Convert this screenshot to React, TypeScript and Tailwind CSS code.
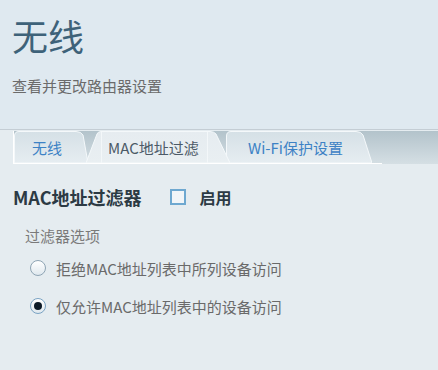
import React from "react";

type TabProps = {
  label: string;
  width: number;
  path: string;
  active?: boolean;
  className: string;
  textClass: string;
};

const Tab = ({ label, width, path, active, className, textClass }: TabProps) => (
  <div className={`relative h-[32px] flex items-center shrink-0 ${className}`}>
    <svg
      className="absolute inset-0"
      width={width}
      height={32}
      viewBox={`0 0 ${width} 32`}
    >
      <defs>
        <linearGradient id={`g-${label}`} x1="0" y1="0" x2="0" y2="1">
          <stop offset="0" stopColor={active ? "#e6ecf0" : "#d5e0e6"} />
          <stop offset="1" stopColor={active ? "#e9eff2" : "#e6edf1"} />
        </linearGradient>
      </defs>
      <path d={path} fill={`url(#g-${label})`} stroke="#f4f8fa" strokeWidth="1" />
      {active && (
        <>
          <line x1="15.5" y1="1" x2="15.5" y2="32" stroke="#f3f7f9" strokeWidth="1" />
          <line x1="121.5" y1="1" x2="121.5" y2="32" stroke="#f3f7f9" strokeWidth="1" />
        </>
      )}
    </svg>
    <span className={`relative text-[15px] leading-none whitespace-nowrap ${textClass}`}>
      {label}
    </span>
  </div>
);

const Radio = ({ checked, label }: { checked?: boolean; label: string }) => (
  <div className="flex items-center h-[16px]">
    <span
      className={`shrink-0 w-[16px] h-[16px] rounded-full border flex items-center justify-center bg-gradient-to-b from-white to-[#dfe8ee] ${
        checked ? "border-[#7aa3c3]" : "border-[#8ea4b4]"
      }`}
    >
      {checked && <span className="w-[8px] h-[8px] rounded-full bg-[#0d1b28]" />}
    </span>
    <span className="ml-[10px] text-[15px] leading-none text-[#6a6a6a]">{label}</span>
  </div>
);

export default function App() {
  return (
    <div className="w-[438px] h-[370px] overflow-hidden bg-[#e5ecf0] font-['Noto_Sans_CJK_SC',sans-serif]">
      <header className="h-[130px] bg-[#dfe9f0] border-b border-[#c4cdd4] px-[12px] pt-[17px]">
        <h1 className="text-[36px] leading-none text-[#3e6279]">无线</h1>
        <p className="mt-[25px] text-[15px] leading-none text-[#6b6b6b]">查看并更改路由器设置</p>
      </header>

      <div className="mt-[1px] ml-[13px] h-[33px] border-l border-white bg-gradient-to-b from-[#b3c3cb] to-[#d5dfe4]">
        <div className="flex items-end h-[32px]">
          <Tab
            label="无线"
            width={74}
            path="M0.5,32 V5 Q0.5,0.5 5,0.5 H62 Q67,0.5 69,4 L74,32 Z"
            className="w-[74px] pl-[18px]"
            textClass="text-[#3d82c5]"
          />
          <Tab
            label="MAC地址过滤"
            width={144}
            path="M0,32 L11,3 Q12,0.5 15,0.5 H124 Q128,0.5 130,3 L144,32 Z"
            active
            className="w-[144px] -ml-[2px] pl-[22px] z-10"
            textClass="text-[#4c5a67]"
          />
          <Tab
            label="Wi-Fi保护设置"
            width={146}
            path="M0.5,32 V5 Q0.5,0.5 5,0.5 H130 Q135,0.5 137,4 L146,32 Z"
            className="w-[146px] -ml-[4px] pl-[22px]"
            textClass="text-[#3d82c5]"
          />
        </div>
        <div className="w-[368px] h-px bg-white" />
      </div>

      <section className="px-[13px] pt-[24px]">
        <div className="flex items-center h-[18px]">
          <h2 className="text-[18px] leading-none font-bold text-[#2c3a44]">MAC地址过滤器</h2>
          <span className="shrink-0 ml-[29px] w-[16px] h-[16px] border-2 border-[#6ea8d0] bg-[#f1f5f8]" />
          <span className="ml-[13px] text-[16px] leading-none font-bold text-[#2c3a44]">启用</span>
        </div>

        <p className="mt-[22px] ml-[12px] text-[15px] leading-none text-[#7a7a7a]">过滤器选项</p>

        <div className="mt-[17px] ml-[17px] flex flex-col gap-[22px]">
          <Radio label="拒绝MAC地址列表中所列设备访问" />
          <Radio checked label="仅允许MAC地址列表中的设备访问" />
        </div>
      </section>
    </div>
  );
}
